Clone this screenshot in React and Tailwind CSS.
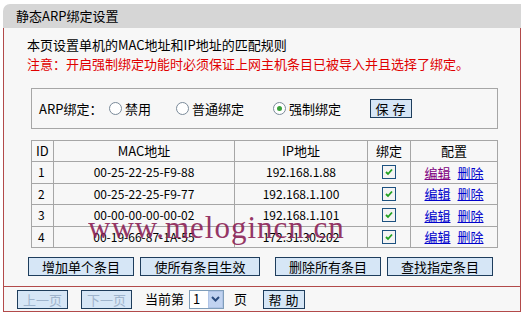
import React from 'react'

const font = { fontFamily: '"SimSun", "Noto Sans CJK SC", "Liberation Sans", sans-serif' }

const rows = [
  { id: 1, mac: '00-25-22-25-F9-88', ip: '192.168.1.88', visited: true },
  { id: 2, mac: '00-25-22-25-F9-77', ip: '192.168.1.100' },
  { id: 3, mac: '00-00-00-00-00-02', ip: '192.168.1.101' },
  { id: 4, mac: '00-19-66-87-1A-55', ip: '172.31.30.202' },
]

const Radio = ({ checked, label }) => (
  <label className='flex items-center gap-[3px]'>
    <span className='w-[13px] h-[13px] rounded-full border border-[#7a8a99] bg-white flex items-center justify-center'>
      {checked && <span className='w-[5px] h-[5px] rounded-full bg-[#3aa13a]' />}
    </span>
    <span>{label}</span>
  </label>
)

const Check = () => (
  <span className='inline-flex w-[14px] h-[14px] border border-[#1c5180] bg-[#f4f4f4] items-center justify-center'>
    <svg width='10' height='10' viewBox='0 0 10 10'>
      <path d='M2 5 L4 7 L8 2.5' stroke='#21a121' strokeWidth='1.8' fill='none' />
    </svg>
  </span>
)

const Btn = ({ children, className = '', disabled }) => (
  <button
    className={`h-[19px] bg-[#d6e6f6] border border-[#1e3d5c] text-[13px] leading-none ${disabled ? 'text-[#9fb4cc]' : 'text-black'} ${className}`}
  >
    {children}
  </button>
)

export default function App() {
  return (
    <div className='w-[525px] h-[318px] bg-white relative text-[12px] text-black' style={font}>
      <div className='ml-[3px] mt-[4px] w-[518px]'>
        <div className='h-[24px] bg-[#d6d6d6] rounded-tl-[7px] flex items-center pl-[13px] text-[13px]'>
          静态ARP绑定设置
        </div>
        <div className='bg-[#f7f7f7] border-l border-r border-b border-[#b24a4a] h-[284px] flex flex-col'>
          <div className='pl-[23px] pt-[7px] text-[13px] leading-[19px]'>
            <p>本页设置单机的MAC地址和IP地址的匹配规则</p>
            <p className='text-[#e00000]'>注意：开启强制绑定功能时必须保证上网主机条目已被导入并且选择了绑定。</p>
          </div>
          <div className='ml-[27px] mt-[15px] w-[467px] h-[41px] border border-[#a6a6a6] flex items-center pl-[7px] text-[13px]'>
            <span className='w-[70px]'>ARP绑定：</span>
            <Radio label='禁用' />
            <span className='w-[25px]' />
            <Radio label='普通绑定' />
            <span className='w-[29px]' />
            <Radio checked label='强制绑定' />
            <span className='w-[29px]' />
            <Btn className='w-[42px] tracking-[4px] pl-[3px]'>保存</Btn>
          </div>
          <table className='ml-[27px] mt-[11px] w-[467px] border-collapse border border-[#a6a6a6] text-[12px]'>
            <thead>
              <tr className='h-[21px] text-[13px]'>
                <th className='w-[22px] border border-[#a6a6a6] font-normal text-left pl-[4px]'>ID</th>
                <th className='w-[181px] border border-[#a6a6a6] font-normal'>MAC地址</th>
                <th className='w-[133px] border border-[#a6a6a6] font-normal'>IP地址</th>
                <th className='w-[43px] border border-[#a6a6a6] font-normal'>绑定</th>
                <th className='border border-[#a6a6a6] font-normal'>配置</th>
              </tr>
            </thead>
            <tbody>
              {rows.map((r) => (
                <tr key={r.id} className='h-[21.5px]'>
                  <td className='border border-[#a6a6a6] pl-[6px]'>{r.id}</td>
                  <td className='border border-[#a6a6a6] text-center'>{r.mac}</td>
                  <td className='border border-[#a6a6a6] text-center'>{r.ip}</td>
                  <td className='border border-[#a6a6a6] text-center align-middle'><Check /></td>
                  <td className='border border-[#a6a6a6] text-center text-[13px]'>
                    <span className={`underline ${r.visited ? 'text-[#800080]' : 'text-[#0000cc]'}`}>编辑</span>
                    <span className='underline text-[#0000cc] ml-[7px]'>删除</span>
                  </td>
                </tr>
              ))}
            </tbody>
          </table>
          <div className='flex ml-[24px] mt-[9px] gap-[6px]'>
            <Btn className='w-[106px]'>增加单个条目</Btn>
            <Btn className='w-[120px]'>使所有条目生效</Btn>
            <span className='w-[3px]' />
            <Btn className='w-[106px]'>删除所有条目</Btn>
            <Btn className='w-[106px]'>查找指定条目</Btn>
          </div>
          <div className='mt-[10px] border-t border-[#b24a4a] flex-1 flex items-center pl-[13px] text-[13px]'>
            <Btn disabled className='w-[51px]'>上一页</Btn>
            <span className='w-[13px]' />
            <Btn disabled className='w-[51px]'>下一页</Btn>
            <span className='ml-[13px]'>当前第</span>
            <span className='ml-[5px] h-[19px] w-[35px] border border-[#7f9db9] bg-white flex items-center justify-between'>
              <span className='pl-[3px]'>1</span>
              <span className='w-[15px] h-[17px] bg-[#c1d3f0] border border-[#b0c4e6] flex items-center justify-center'>
                <svg width='9' height='6' viewBox='0 0 9 6'>
                  <path d='M1 1 L4.5 4.5 L8 1' stroke='#2b4c7e' strokeWidth='2' fill='none' />
                </svg>
              </span>
            </span>
            <span className='ml-[10px]'>页</span>
            <span className='w-[16px]' />
            <Btn className='w-[42px] tracking-[4px] pl-[3px]'>帮助</Btn>
          </div>
        </div>
      </div>
      <div
        className='absolute left-[88px] top-[208px] text-[31px] leading-none text-[#8b2256] opacity-90 tracking-[1px] pointer-events-none'
        style={{ fontFamily: '"Liberation Serif", serif' }}
      >
        www.melogincn.cn
      </div>
    </div>
  )
}
